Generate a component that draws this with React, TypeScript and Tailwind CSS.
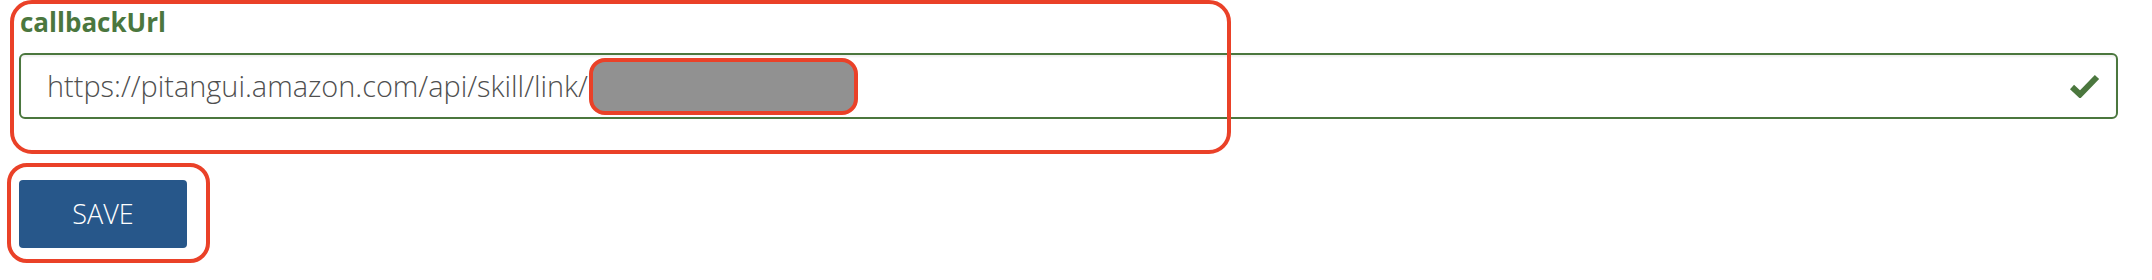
const CheckMark = () => (
  <svg width="30" height="24" viewBox="0 0 30 24" className="shrink-0">
    <polyline
      points="2,13 10,20.5 27,3"
      fill="none"
      stroke="#4b773e"
      strokeWidth="6"
      strokeLinecap="butt"
      strokeLinejoin="miter"
    />
  </svg>
);

const App = () => {
  return (
    <div className="relative h-[280px] w-full bg-white font-['Open_Sans',sans-serif]">
      <div className="flex flex-col pl-[19px] pr-[34px] pt-[4px]">
        {/* Label */}
        <label className="text-[26px] font-bold leading-[36px] text-[#4b773e] pl-[1px]">
          callbackUrl
        </label>

        {/* Input */}
        <div className="mt-[13px] flex h-[66px] items-center justify-between rounded-[6px] border-2 border-[#4b773e] bg-white pl-[26px] pr-[16px] shadow-[inset_0_2px_2px_rgba(0,0,0,0.06)]">
          <div className="flex items-center">
            <span className="text-[28.9px] font-light text-[#4f4f4f] whitespace-nowrap">
              https://pitangui.amazon.com/api/skill/link/
            </span>
            <span className="ml-[1px] inline-block h-[57px] w-[269px] rounded-[16px] border-4 border-[#ea4128] bg-[#919191]" />
          </div>
          <CheckMark />
        </div>

        {/* Save */}
        <button className="mt-[61px] flex h-[68px] w-[168px] items-center justify-center rounded-[4px] bg-[#27578a] text-[27px] font-light text-white">
          SAVE
        </button>
      </div>

      {/* annotation outlines */}
      <div className="pointer-events-none absolute left-[10px] top-0 h-[154px] w-[1221px] rounded-[22px] border-4 border-[#ea4128]" />
      <div className="pointer-events-none absolute left-[7px] top-[163px] h-[100px] w-[203px] rounded-[20px] border-4 border-[#ea4128]" />
    </div>
  );
};

export default App;
